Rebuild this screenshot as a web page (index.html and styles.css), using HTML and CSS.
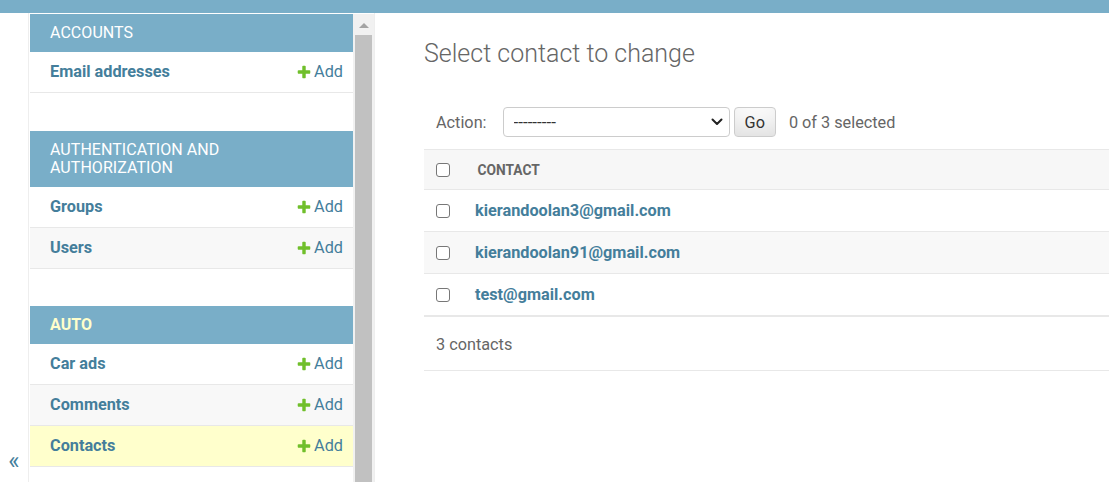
FILE: index.html
```html
<!DOCTYPE html>
<html lang="en">
<head>
<meta charset="utf-8">
<title>Select contact to change</title>
<link rel="stylesheet" href="styles.css">
</head>
<body>
<div class="top-bar"></div>
<div class="main">
  <div class="toggle"><span class="toggle-glyph">«</span></div>
  <nav class="sidebar">
    <div class="modules">
      <div class="module">
        <div class="caption">Accounts</div>
        <div class="row"><a class="model" href="#">Email addresses</a><a class="addlink" href="#"><svg width="16" height="16" viewBox="0 0 1792 1792"><path fill="#70bf2b" d="M1600 796v192q0 40-28 68t-68 28h-416v416q0 40-28 68t-68 28h-192q-40 0-68-28t-28-68v-416h-416q-40 0-68-28t-28-68v-192q0-40 28-68t68-28h416v-416q0-40 28-68t68-28h192q40 0 68 28t28 68v416h416q40 0 68 28t28 68z"/></svg>Add</a></div>
      </div>
      <div class="module">
        <div class="caption">Authentication and Authorization</div>
        <div class="row"><a class="model" href="#">Groups</a><a class="addlink" href="#"><svg width="16" height="16" viewBox="0 0 1792 1792"><path fill="#70bf2b" d="M1600 796v192q0 40-28 68t-68 28h-416v416q0 40-28 68t-68 28h-192q-40 0-68-28t-28-68v-416h-416q-40 0-68-28t-28-68v-192q0-40 28-68t68-28h416v-416q0-40 28-68t68-28h192q40 0 68 28t28 68v416h416q40 0 68 28t28 68z"/></svg>Add</a></div>
        <div class="row alt"><a class="model" href="#">Users</a><a class="addlink" href="#"><svg width="16" height="16" viewBox="0 0 1792 1792"><path fill="#70bf2b" d="M1600 796v192q0 40-28 68t-68 28h-416v416q0 40-28 68t-68 28h-192q-40 0-68-28t-28-68v-416h-416q-40 0-68-28t-28-68v-192q0-40 28-68t68-28h416v-416q0-40 28-68t68-28h192q40 0 68 28t28 68v416h416q40 0 68 28t28 68z"/></svg>Add</a></div>
      </div>
      <div class="module current-app">
        <div class="caption">Auto</div>
        <div class="row"><a class="model" href="#">Car ads</a><a class="addlink" href="#"><svg width="16" height="16" viewBox="0 0 1792 1792"><path fill="#70bf2b" d="M1600 796v192q0 40-28 68t-68 28h-416v416q0 40-28 68t-68 28h-192q-40 0-68-28t-28-68v-416h-416q-40 0-68-28t-28-68v-192q0-40 28-68t68-28h416v-416q0-40 28-68t68-28h192q40 0 68 28t28 68v416h416q40 0 68 28t28 68z"/></svg>Add</a></div>
        <div class="row alt"><a class="model" href="#">Comments</a><a class="addlink" href="#"><svg width="16" height="16" viewBox="0 0 1792 1792"><path fill="#70bf2b" d="M1600 796v192q0 40-28 68t-68 28h-416v416q0 40-28 68t-68 28h-192q-40 0-68-28t-28-68v-416h-416q-40 0-68-28t-28-68v-192q0-40 28-68t68-28h416v-416q0-40 28-68t68-28h192q40 0 68 28t28 68v416h416q40 0 68 28t28 68z"/></svg>Add</a></div>
        <div class="row current"><a class="model" href="#">Contacts</a><a class="addlink" href="#"><svg width="16" height="16" viewBox="0 0 1792 1792"><path fill="#70bf2b" d="M1600 796v192q0 40-28 68t-68 28h-416v416q0 40-28 68t-68 28h-192q-40 0-68-28t-28-68v-416h-416q-40 0-68-28t-28-68v-192q0-40 28-68t68-28h416v-416q0-40 28-68t68-28h192q40 0 68 28t28 68v416h416q40 0 68 28t28 68z"/></svg>Add</a></div>
      </div>
    </div>
    <div class="scrollbar">
      <div class="scroll-arrow"></div>
      <div class="scroll-thumb"></div>
    </div>
  </nav>
  <div class="content">
    <h1>Select contact to change</h1>
    <div class="actions">
      <label class="action-label">Action:</label>
      <span class="select-wrap">
        <select class="action-select"><option>---------</option></select>
        <svg class="chevron" width="12" height="8" viewBox="0 0 12 8"><path d="M1.5 1.5 6 6l4.5-4.5" fill="none" stroke="#222" stroke-width="2" stroke-linecap="round" stroke-linejoin="round"/></svg>
      </span>
      <button class="go">Go</button>
      <span class="counter">0 of 3 selected</span>
    </div>
    <table class="results">
      <thead>
        <tr><th class="cb-col"><span class="checkbox"></span></th><th class="head">Contact</th></tr>
      </thead>
      <tbody>
        <tr><td class="cb-col"><span class="checkbox"></span></td><th class="cell"><a href="#">kierandoolan3@gmail.com</a></th></tr>
        <tr class="alt"><td class="cb-col"><span class="checkbox"></span></td><th class="cell"><a href="#">kierandoolan91@gmail.com</a></th></tr>
        <tr><td class="cb-col"><span class="checkbox"></span></td><th class="cell"><a href="#">test@gmail.com</a></th></tr>
      </tbody>
    </table>
    <p class="paginator">3 contacts</p>
  </div>
</div>
</body>
</html>
```

FILE: styles.css
```css
* { box-sizing: border-box; }
html, body { margin: 0; padding: 0; }
body {
  width: 1109px;
  height: 482px;
  overflow: hidden;
  background: #fff;
  color: #333;
  font-family: Roboto, "Liberation Sans", Arial, sans-serif;
  font-size: 17.5px;
}
a { text-decoration: none; color: #447e9b; }

.top-bar { height: 13px; background: #79aec8; }

.main { display: flex; height: 469px; }

.toggle {
  flex: 0 0 29px;
  border-right: 1px solid #eee;
  display: flex;
  align-items: flex-end;
  justify-content: center;
  padding-bottom: 9px;
}
.toggle-glyph { color: #447e9b; font-size: 24px; line-height: 24px; }

.sidebar {
  flex: 0 0 346px;
  display: flex;
  border-right: 1px solid #eee;
  padding-top: 1px;
}
.modules { flex: 1; padding-left: 1px; overflow: hidden; }
.module { margin-bottom: 37.5px; }
.caption {
  background: #79aec8;
  color: #fff;
  padding: 10px 10px 10px 20px;
  font-size: 16px;
  line-height: 18px;
  letter-spacing: 0.05px;
  text-transform: uppercase;
}
.current-app .caption { color: #ffc; font-weight: 700; }
.row {
  display: flex;
  justify-content: space-between;
  align-items: center;
  padding: 10px 10px 10px 20px;
  line-height: 20px;
  font-size: 16.25px;
  border-bottom: 1px solid #e8e8e8;
  background: #fff;
}
.row.alt { background: #f8f8f8; }
.row.current { background: #ffc; }
.model { font-weight: 700; }
.addlink { display: flex; align-items: center; gap: 2px; }

.scrollbar {
  flex: 0 0 21px;
  background: #f1f1f1;
  display: flex;
  flex-direction: column;
  align-items: center;
}
.scroll-arrow {
  margin-top: 9px;
  width: 0; height: 0;
  border-left: 5px solid transparent;
  border-right: 5px solid transparent;
  border-bottom: 5px solid #a3a3a3;
}
.scroll-thumb {
  margin-top: 7px;
  width: 17px;
  flex: 1;
  background: #c1c1c1;
}

.content { flex: 1; padding: 26px 0 0 49px; overflow: hidden; }
h1 {
  margin: 0 0 24px;
  font-size: 25px;
  line-height: 30px;
  font-weight: 300;
  color: #666;
}

.actions {
  display: flex;
  align-items: center;
  height: 56px;
  padding: 2px 12px 0;
  color: #666;
  font-size: 16.25px;
}
.select-wrap { position: relative; margin-left: 16px; display: flex; }
.action-select {
  appearance: none;
  -webkit-appearance: none;
  width: 227px;
  height: 30px;
  border: 1px solid #ccc;
  border-radius: 4px;
  background: #fff;
  color: #333;
  font-family: inherit;
  font-size: 17px;
  padding: 0 0 0 10px;
}
.chevron { position: absolute; right: 7px; top: 11px; }
.go {
  margin-left: 4px;
  height: 30px;
  padding: 0 10px;
  border: 1px solid #ccc;
  border-radius: 4px;
  background: #fafafa;
  box-shadow: 0 -19px 25px -12px rgba(0,0,0,0.12) inset;
  color: #333;
  font-family: inherit;
  font-size: 16.25px;
}
.counter { margin-left: 13px; }

.results { width: 100%; border-collapse: separate; border-spacing: 0; }
.results thead th {
  background: #f7f7f7;
  border-top: 1px solid #e8e8e8;
  border-bottom: 1px solid #e8e8e8;
  height: 41px;
  text-align: left;
  vertical-align: middle;
}
.checkbox {
  display: block;
  width: 14px;
  height: 14px;
  border: 1.5px solid #777;
  border-radius: 3px;
  background: #fff;
}
.cb-col { width: 41px; padding: 0 0 0 12px; }
.results th.head {
  padding: 0 12.5px;
  color: #666;
  font-size: 13.75px;
  font-weight: 700;
  text-transform: uppercase;
}
.results tbody td, .results tbody th {
  height: 42px;
  vertical-align: middle;
  border-bottom: 1px solid #e8e8e8;
}
.results tbody tr.alt td, .results tbody tr.alt th { background: #f8f8f8; }
.results th.cell {
  text-align: left;
  padding: 0 10px;
  font-size: 16.25px;
  font-weight: 700;
  line-height: 20px;
}
.paginator {
  margin: 0;
  border-top: 1px solid #e8e8e8;
  border-bottom: 1px solid #e8e8e8;
  padding: 13.5px 12px 12.5px;
  line-height: 27px;
  color: #666;
  font-size: 16.25px;
}
```
